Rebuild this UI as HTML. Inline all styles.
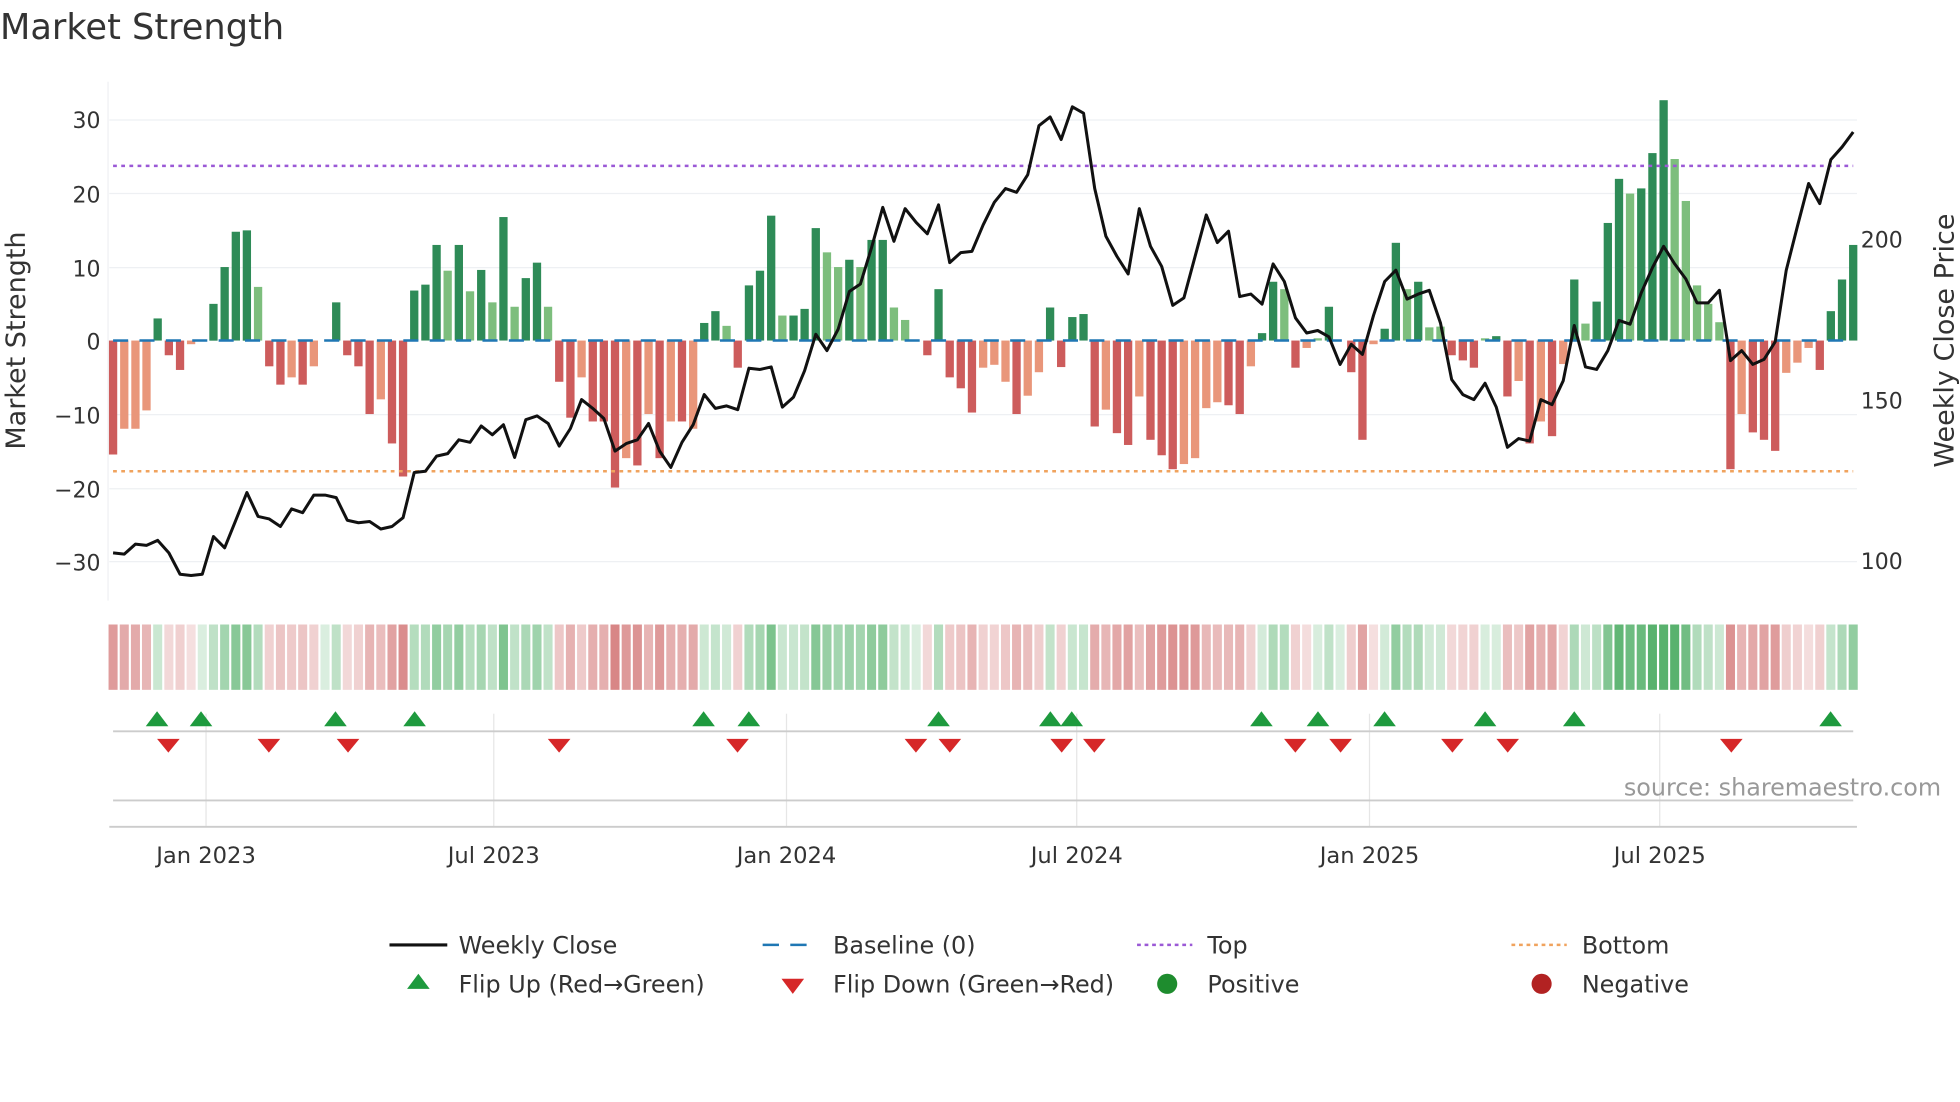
<!DOCTYPE html>
<html><head><meta charset="utf-8"><style>
html,body{margin:0;padding:0;background:#fff;width:1960px;height:1102px;overflow:hidden}
svg{display:block;font-family:"DejaVu Sans","Liberation Sans",sans-serif}
</style></head><body>
<svg id="c" width="1960" height="1102" viewBox="0 0 1560 877" xmlns="http://www.w3.org/2000/svg">
<rect width="1560" height="877" fill="#fff"/>
<text x="0" y="31" font-size="28" fill="#333">Market Strength</text>
<g stroke="#eef0f3" stroke-width="1">
<line x1="87" x2="1478" y1="95.5" y2="95.5"/><line x1="87" x2="1478" y1="154" y2="154"/>
<line x1="87" x2="1478" y1="213" y2="213"/><line x1="87" x2="1478" y1="330" y2="330"/>
<line x1="87" x2="1478" y1="389" y2="389"/><line x1="87" x2="1478" y1="447" y2="447"/>
<line x1="86" x2="86" y1="65" y2="478"/>
</g>
<g font-size="17.5" fill="#333" text-anchor="end">
<text x="80" y="102">30</text><text x="80" y="161">20</text><text x="80" y="220">10</text>
<text x="80" y="278">0</text><text x="80" y="337">−10</text><text x="80" y="396">−20</text><text x="80" y="454">−30</text>
</g>
<g font-size="17.5" fill="#333"><text x="1481" y="197">200</text><text x="1481" y="325">150</text><text x="1481" y="453">100</text></g>
<text transform="translate(20,271) rotate(-90)" font-size="21.5" fill="#333" text-anchor="middle">Market Strength</text>
<text transform="translate(1555,271) rotate(-90)" font-size="21.5" fill="#333" text-anchor="middle">Weekly Close Price</text>
<g id="bars"></g>
<line x1="90" x2="1475" y1="271" y2="271" stroke="#1f77b4" stroke-width="2" stroke-dasharray="12,9"/>
<line x1="90" x2="1475" y1="132" y2="132" stroke="#9b59d6" stroke-width="2" stroke-dasharray="3,3.5"/>
<line x1="90" x2="1475" y1="375" y2="375" stroke="#f0a35e" stroke-width="2" stroke-dasharray="3,3.5"/>
<polyline id="price" fill="none" stroke="#111" stroke-width="2.4" stroke-linejoin="round"/>
<g id="heat"></g>
<g stroke="#e6e6e6" stroke-width="1">
<line x1="164" x2="164" y1="568" y2="658"/><line x1="393" x2="393" y1="568" y2="658"/>
<line x1="626" x2="626" y1="568" y2="658"/><line x1="857" x2="857" y1="568" y2="658"/>
<line x1="1090" x2="1090" y1="568" y2="658"/><line x1="1321" x2="1321" y1="568" y2="658"/>
</g>
<line x1="90" x2="1475" y1="582" y2="582" stroke="#ccc" stroke-width="1.5"/>
<line x1="90" x2="1475" y1="637" y2="637" stroke="#ccc" stroke-width="1.5"/>
<line x1="87" x2="1478" y1="658" y2="658" stroke="#ccc" stroke-width="1.5"/>
<g id="flips"></g>
<text x="1545" y="633" font-size="19" fill="#999" text-anchor="end">source: sharemaestro.com</text>
<g font-size="18" fill="#333" text-anchor="middle">
<text x="164" y="687">Jan 2023</text><text x="393" y="687">Jul 2023</text><text x="626" y="687">Jan 2024</text>
<text x="857" y="687">Jul 2024</text><text x="1090" y="687">Jan 2025</text><text x="1321" y="687">Jul 2025</text>
</g>
<g font-size="19" fill="#333">
<line x1="310" x2="356" y1="752" y2="752" stroke="#111" stroke-width="2.5"/>
<text x="365" y="759">Weekly Close</text>
<line x1="607" x2="651" y1="752" y2="752" stroke="#1f77b4" stroke-width="2" stroke-dasharray="13,9"/>
<text x="663" y="759">Baseline (0)</text>
<line x1="905" x2="949" y1="752" y2="752" stroke="#9b59d6" stroke-width="2" stroke-dasharray="3,3"/>
<text x="961" y="759">Top</text>
<line x1="1203" x2="1247" y1="752" y2="752" stroke="#f0a35e" stroke-width="2" stroke-dasharray="3,3"/>
<text x="1259" y="759">Bottom</text>
<polygon points="333,775 342,787 324,787" fill="#1e9a3e"/>
<text x="365" y="790">Flip Up (Red→Green)</text>
<polygon points="622,779 640,779 631,791" fill="#d62728"/>
<text x="663" y="790">Flip Down (Green→Red)</text>
<circle cx="929" cy="783" r="8" fill="#1e8c2e"/>
<text x="961" y="790">Positive</text>
<circle cx="1227" cy="783" r="8" fill="#b22222"/>
<text x="1259" y="790">Negative</text>
</g>
</svg>
<script>
var d="-15.5r,-12R,-12R,-9.5R,3g,-2r,-4r,-0.5R,0g,5g,10g,14.8g,15g,7.3G,-3.5r,-6r,-5R,-6r,-3.5R,0g,5.2g,-2r,-3.5r,-10r,-8R,-14r,-18.5r,6.8g,7.6g,13g,9.5G,13g,6.7G,9.6g,5.2G,16.8g,4.6G,8.5g,10.6g,4.6G,-5.6r,-10.5r,-5R,-11r,-11r,-20r,-16R,-17r,-10R,-16r,-11R,-11r,-12R,2.4g,4g,2G,-3.7r,7.5g,9.5g,17g,3.4G,3.4g,4.3g,15.3g,12G,10G,11g,10G,13.7g,13.7g,4.5G,2.8G,0g,-2r,7g,-5r,-6.5r,-9.8r,-3.7R,-3.3R,-5.6R,-10r,-7.5R,-4.3R,4.5g,-3.6r,3.2g,3.6g,-11.7r,-9.4R,-12.6r,-14.2r,-7.6R,-13.5r,-15.6r,-17.5r,-16.8R,-16R,-9.2R,-8.4R,-8.8r,-10r,-3.5R,1g,8g,7G,-3.7r,-1R,0.3G,4.6g,0g,-4.3r,-13.5r,-0.5R,1.6g,13.3g,7G,8g,1.8G,1.9G,-2r,-2.7r,-3.7r,0.3G,0.6g,-7.6r,-5.5R,-14r,-11R,-13r,-3.2R,8.3g,2.3G,5.3g,16g,22g,20G,20.7g,25.5g,32.7g,24.7G,19G,7.5G,5G,2.5G,-17.5r,-10R,-12.5r,-13.5r,-15r,-4.4R,-3R,-1R,-4r,4g,8.3g,13g".split(",");
var n=d.length,step=1385/(n-1),col={g:"#2e8b57",G:"#7dbe7d",r:"#cd5c5c",R:"#e9967a"},b="",h="";
for(var i=0;i<n;i++){var v=parseFloat(d[i]),t=d[i].slice(-1),x=90+i*step,y0=271,y1=271-v*5.85;
 if(Math.abs(v)>0.05)b+='<rect x="'+(x-3.3).toFixed(1)+'" y="'+Math.min(y0,y1).toFixed(1)+'" width="6.6" height="'+Math.abs(y1-y0).toFixed(1)+'" fill="'+col[t]+'"/>';
 var a=Math.min(1,0.22+Math.abs(v)/30),c=v>=0?"rgba(60,165,85,"+(a*0.85).toFixed(2)+")":"rgba(200,85,85,"+(a*0.8).toFixed(2)+")";
 h+='<rect x="'+(x-3.6).toFixed(1)+'" y="497" width="7.2" height="52" fill="'+c+'"/>';}
document.getElementById("bars").innerHTML=b;document.getElementById("heat").innerHTML=h;
var py=[440,441,433,434,430,440,457,458,457,427,436,414,392,411,413,419,405,408,394,394,396,414,416,415,421,419,412,376,375,363,361,350,352,339,346,338,364,334,331,337,355,341,318,325,333,359,353,350,337,359,372,352,338,314,325,323,326,293,294,292,324,316,295,266,279,262,232,226,197,165,192,166,177,186,163,209,201,200,179,161,150,153,139,100,93,111,85,90,150,188,204,218,166,196,212,243,237,204,171,193,184,236,234,242,210,224,253,265,263,268,290,274,282,251,224,215,238,234,231,257,302,314,318,305,324,356,349,351,318,322,303,259,292,294,279,255,258,233,213,196,210,222,241,241,231,287,279,290,286,272,215,180,146,162,127,117,105];
var ps=1385/(py.length-1),pts=py.map(function(y,i){return (90+i*ps).toFixed(1)+","+y}).join(" ");
document.getElementById("price").setAttribute("points",pts);
var up=[125,160,267,330,560,596,747,836,853,1004,1049,1102,1182,1253,1457],dn=[134,214,277,445,587,729,756,845,871,1031,1067,1156,1200,1378],f="";
up.forEach(function(x){f+='<polygon points="'+x+',566 '+(x+9)+',578 '+(x-9)+',578" fill="#1e9a3e"/>'});
dn.forEach(function(x){f+='<polygon points="'+(x-9)+',588 '+(x+9)+',588 '+x+',599" fill="#d62728"/>'});
document.getElementById("flips").innerHTML=f;
</script>
</body></html>
